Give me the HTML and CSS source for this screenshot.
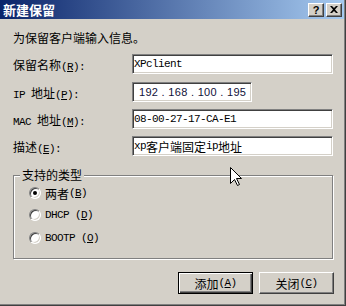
FILE: index.html
```html
<!DOCTYPE html>
<html>
<head>
<meta charset="utf-8">
<title>新建保留</title>
<link rel="stylesheet" href="styles.css">
</head>
<body>
<div class="window">
	<div class="titlebar">
		<span class="title">新建保留</span>
		<span class="tbtn help">?</span>
		<span class="tbtn close">
			<svg width="8" height="7" viewBox="0 0 8 7"><path d="M0 0h2l2 2 2-2h2L5 3.5 8 7H6L4 5 2 7H0l3-3.5z" fill="#000"/></svg>
		</span>
	</div>
	<div class="content">
		<p class="intro">为保留客户端输入信息。</p>

		<div class="row first">
			<label>保留名称<span class="a">(<u>R</u>):</span></label>
			<div class="edit"><span class="a">XPclient</span></div>
		</div>
		<div class="row second">
			<label><span class="a">IP </span>地址<span class="a">(<u>P</u>):</span></label>
			<div class="edit ip">192 . 168 . 100 . 195</div>
		</div>
		<div class="row">
			<label><span class="a">MAC </span>地址<span class="a">(<u>M</u>):</span></label>
			<div class="edit"><span class="a">08-00-27-17-CA-E1</span></div>
		</div>
		<div class="row">
			<label>描述<span class="a">(<u>E</u>):</span></label>
			<div class="edit"><span class="a">xp</span>客户端固定<span class="a">ip</span>地址</div>
		</div>

		<fieldset class="group">
			<legend>支持的类型</legend>
			<div class="opt"><span class="radio checked"></span>两者<span class="a">(<u>B</u>)</span></div>
			<div class="opt second"><span class="radio"></span><span class="a">DHCP (<u>D</u>)</span></div>
			<div class="opt third"><span class="radio"></span><span class="a">BOOTP (<u>O</u>)</span></div>
		</fieldset>

		<div class="buttons">
			<div class="btn default">添加<span class="a">(<u>A</u>)</span></div>
			<div class="btn">关闭<span class="a">(<u>C</u>)</span></div>
		</div>
	</div>

	<svg class="cursor" width="13" height="20" viewBox="0 0 13 20"><path d="M0.5 0.5V16.5L4.5 12.5L7.5 18.5L9.5 17.5L6.5 11.5H11.5Z" fill="#fff" stroke="#000" stroke-width="1"/></svg>
</div>
</body>
</html>
```

FILE: styles.css
```css
/*   #D4D0C8; /*dialog gray*/
/*   #808080; /*shadow*/
/*   #404040; /*dark shadow*/
body{
	margin:0;
	background:#D4D0C8;
	font-family:"Noto Sans CJK SC", sans-serif;
	font-size:12px;
	color:#000;
}
.window{
	position:relative;
	width:346px;
	height:306px;
	box-sizing:border-box;
	padding-right:1px;
	background:#D4D0C8;
	border-right:1px solid #404040;
	border-bottom:1px solid #404040;
	box-shadow:inset -1px -1px #808080;
	overflow:hidden;
}
.titlebar{
	display:flex;
	align-items:center;
	height:19px;
	padding:0 2px 0 3px;
	background:linear-gradient(to right, #0A246A, #A6CAF0);
}
.title{
	color:#fff;
	font-weight:bold;
	font-size:13px;
	line-height:19px;
}
.tbtn{
	display:flex;
	align-items:center;
	justify-content:center;
	width:16px;
	height:14px;
	box-sizing:border-box;
	background:#D4D0C8;
	border:1px solid;
	border-color:#fff #404040 #404040 #fff;
	box-shadow:inset -1px -1px #808080;
}
.help{
	margin-left:auto;
	font-family:"Liberation Sans", sans-serif;
	font-weight:bold;
	font-size:11px;
	line-height:12px;
}
.close{
	margin-left:2px;
}
.content{
	padding:0 10px 0 13px;
}
.a{
	font-family:"Liberation Mono", monospace;
	font-size:11px;
	letter-spacing:-0.6px;
}
.intro{
	margin:12px 0 0;
	line-height:14px;
}
.row{
	display:flex;
	align-items:center;
	height:20px;
	margin-top:7px;
}
.row.first{
	margin-top:9px;
}
.row.second{
	margin-top:8px;
}
label{
	width:119px;
	white-space:pre;
}
.edit{
	display:flex;
	align-items:center;
	width:201px;
	height:20px;
	box-sizing:border-box;
	padding:0 1px;
	background:#fff;
	border:1px solid;
	border-color:#808080 #fff #fff #808080;
	box-shadow:inset 1px 1px #404040, inset -1px -1px #D4D0C8;
	white-space:pre;
}
.edit.ip{
	width:120px;
	padding-left:6px;
	font-family:"Liberation Sans", sans-serif;
	font-size:11px;
	letter-spacing:0.3px;
	color:#10103a;
}
.group{
	width:320px;
	box-sizing:border-box;
	margin:12px 0 0;
	padding:4px 0 13px 15px;
	border:1px solid #808080;
	box-shadow:inset 1px 1px #fff, 1px 1px #fff;
}
.group legend{
	margin-left:-9px;
	padding:0 2px;
	line-height:14px;
	background:#D4D0C8;
}
.opt{
	display:flex;
	align-items:center;
	height:14px;
	white-space:pre;
}
.opt.second{
	margin-top:8px;
}
.opt.third{
	margin-top:9px;
}
.radio{
	position:relative;
	width:12px;
	height:12px;
	box-sizing:border-box;
	margin-right:4px;
	border-radius:50%;
	background:#fff;
	border:1px solid;
	border-color:#808080 #fff #fff #808080;
	box-shadow:inset 1px 1px #404040, inset -1px -1px #D4D0C8;
}
.radio.checked::after{
	content:"";
	position:absolute;
	left:3px;
	top:3px;
	width:4px;
	height:4px;
	border-radius:50%;
	background:#000;
}
.buttons{
	display:flex;
	justify-content:flex-end;
	gap:6px;
	margin-top:13px;
}
.btn{
	display:flex;
	align-items:center;
	justify-content:center;
	width:75px;
	height:22px;
	box-sizing:border-box;
	background:#D4D0C8;
	border:1px solid;
	border-color:#fff #404040 #404040 #fff;
	box-shadow:inset -1px -1px #808080;
	white-space:pre;
}
.btn.default{
	border-color:#000;
	box-shadow:inset 1px 1px #fff, inset -1px -1px #404040, inset -2px -2px #808080;
}
.cursor{
	position:absolute;
	left:230px;
	top:167px;
}
```
